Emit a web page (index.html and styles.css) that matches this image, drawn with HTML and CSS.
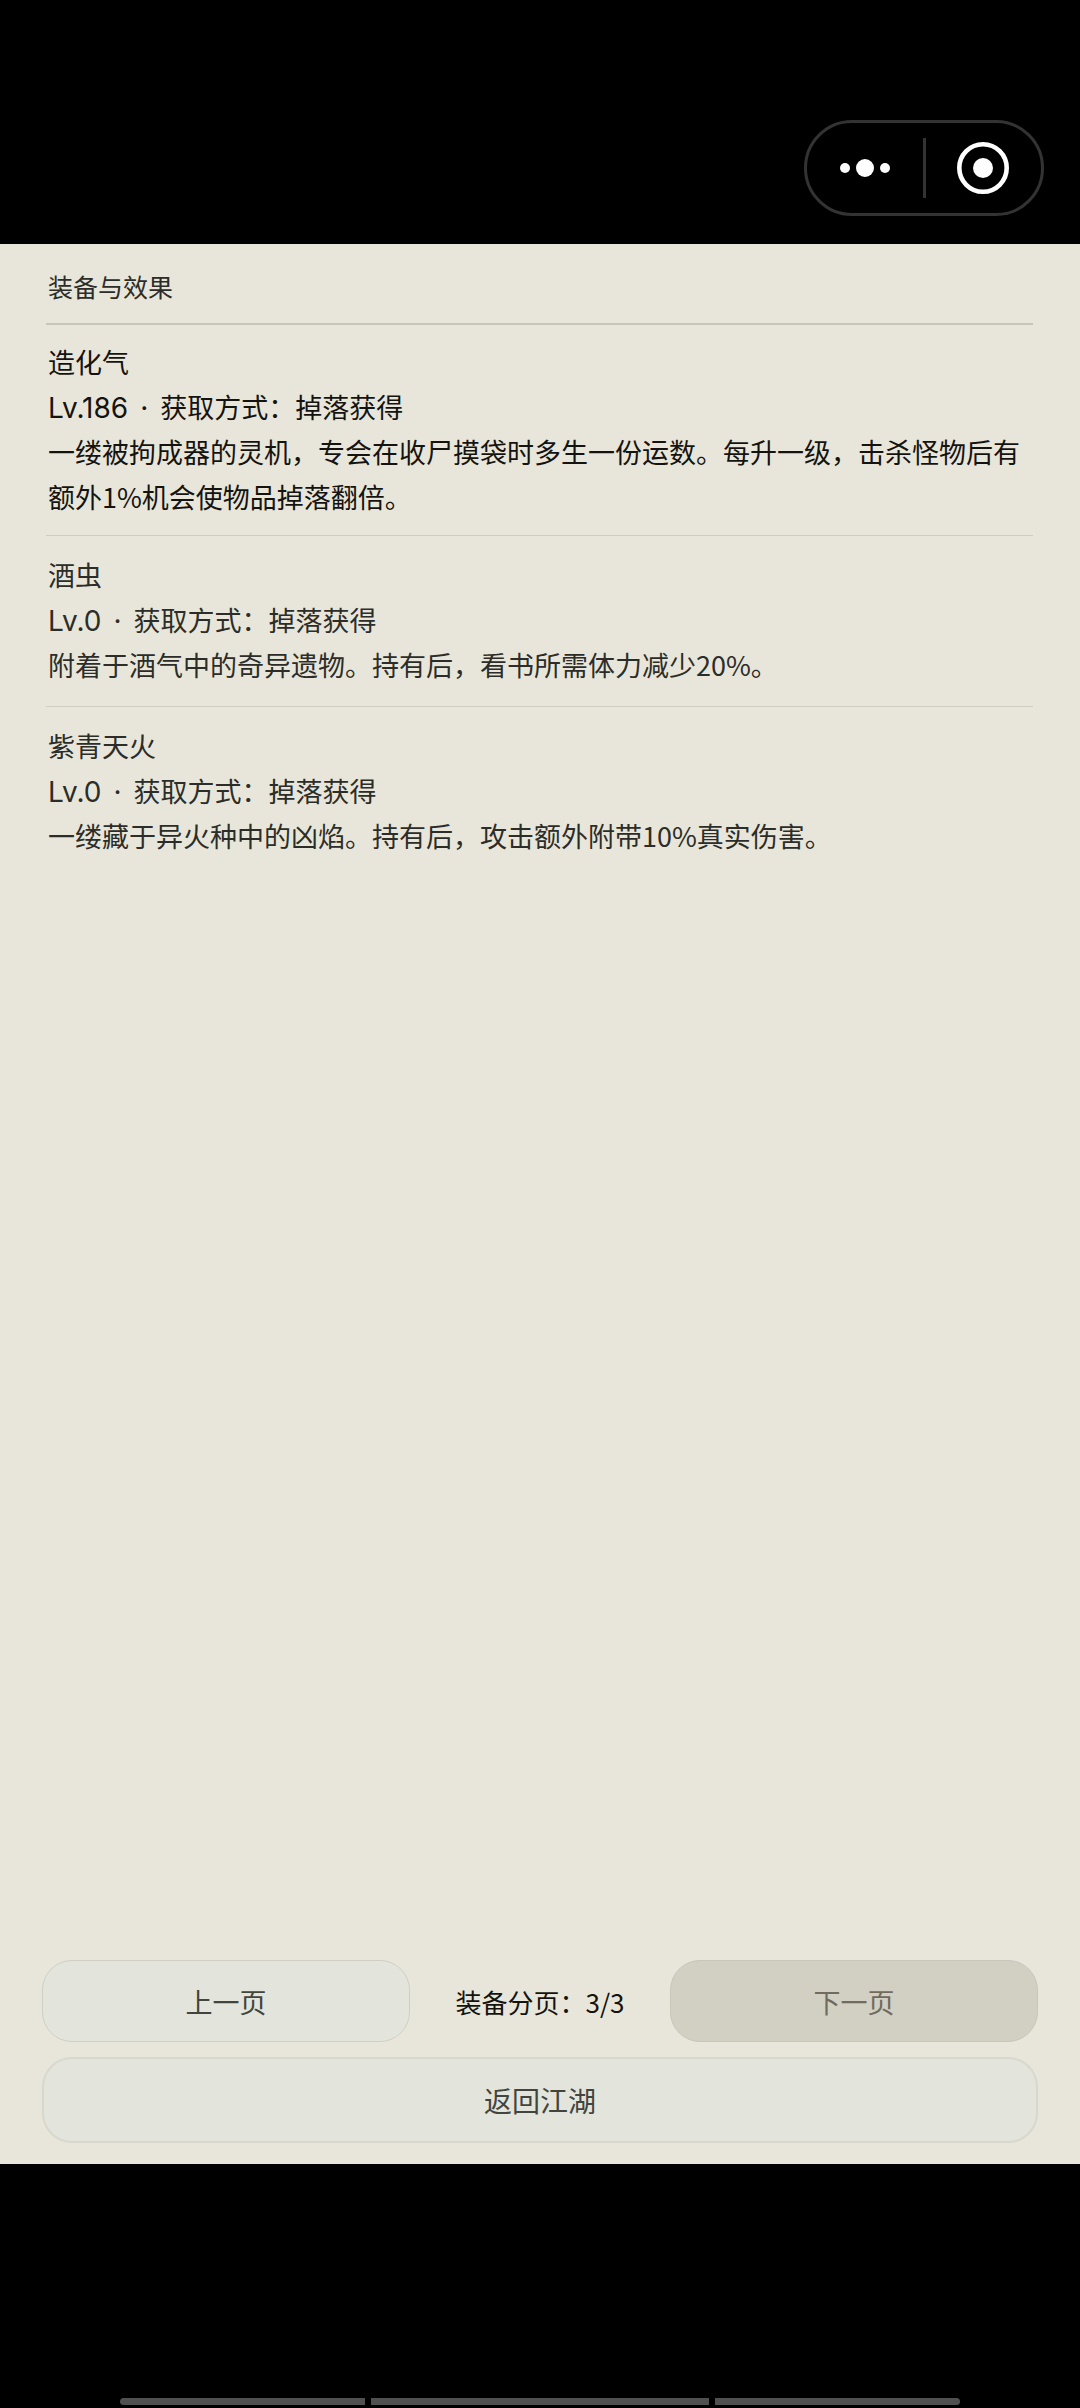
FILE: index.html
```html
<!DOCTYPE html>
<html lang="zh-CN">
<head>
  <meta charset="UTF-8">
  <meta name="viewport" content="width=device-width, initial-scale=1.0">
  <title>装备与效果</title>
  <link rel="stylesheet" href="styles.css">
</head>
<body>
  <header class="top-bar">
    <div class="capsule">
      <button class="capsule-btn" type="button" aria-label="更多">
        <svg width="52" height="20" viewBox="0 0 52 20">
          <circle cx="6" cy="10" r="5" fill="#fff"/>
          <circle cx="26" cy="10" r="9" fill="#fff"/>
          <circle cx="46" cy="10" r="5" fill="#fff"/>
        </svg>
      </button>
      <span class="capsule-line"></span>
      <button class="capsule-btn" type="button" aria-label="关闭">
        <svg width="52" height="52" viewBox="0 0 52 52">
          <circle cx="26" cy="26" r="23.7" fill="none" stroke="#fff" stroke-width="4.6"/>
          <circle cx="26" cy="26" r="10" fill="#fff"/>
        </svg>
      </button>
    </div>
  </header>

  <main class="panel">
    <section class="equip">
      <h1 class="equip-title">装备与效果</h1>
      <ul class="equip-list">
        <li class="equip-item active">
          <h2>造化气</h2>
          <p><span class="level">Lv.186<span class="dot">·</span></span>获取方式：掉落获得</p>
          <p>一缕被拘成器的灵机，专会在收尸摸袋时多生一份运数。每升一级，击杀怪物后有额外1%机会使物品掉落翻倍。</p>
        </li>
        <li class="equip-item">
          <h2>酒虫</h2>
          <p><span class="level">Lv.0<span class="dot">·</span></span>获取方式：掉落获得</p>
          <p>附着于酒气中的奇异遗物。持有后，看书所需体力减少20%。</p>
        </li>
        <li class="equip-item">
          <h2>紫青天火</h2>
          <p><span class="level">Lv.0<span class="dot">·</span></span>获取方式：掉落获得</p>
          <p>一缕藏于异火种中的凶焰。持有后，攻击额外附带10%真实伤害。</p>
        </li>
      </ul>
    </section>

    <nav class="actions">
      <div class="pager">
        <button class="btn" type="button">上一页</button>
        <span class="pager-info">装备分页：3/3</span>
        <button class="btn" type="button" disabled>下一页</button>
      </div>
      <button class="btn btn-back" type="button">返回江湖</button>
    </nav>
  </main>

  <footer class="dock">
    <span></span>
    <span></span>
    <span></span>
  </footer>
</body>
</html>
```
FILE: styles.css
```css
* {
  box-sizing: border-box;
  margin: 0;
  padding: 0;
}

body {
  font-family: 'Noto Sans CJK SC', sans-serif;
  font-size: 27px;
  line-height: 45px;
  background-color: #000;
  color: #2c2d28;
  min-height: 100vh;
  display: flex;
  flex-direction: column;
}

.top-bar {
  display: flex;
  justify-content: flex-end;
  padding: 120px 36px 28px;
}

.capsule {
  display: flex;
  align-items: center;
  width: 240px;
  height: 96px;
  border: 3px solid #333;
  border-radius: 48px;
}

.capsule-btn {
  flex: 1;
  display: flex;
  justify-content: center;
  align-items: center;
  height: 100%;
  background: none;
  border: none;
  cursor: pointer;
}

.capsule-line {
  width: 3px;
  height: 60px;
  background-color: #333;
}

.panel {
  flex: 1;
  display: flex;
  flex-direction: column;
  justify-content: space-between;
  background-color: #e8e6db;
}

.equip {
  padding: 20px 47px 0 46px;
}

.equip-title {
  padding: 0 2px 14px;
  font-size: 25px;
  font-weight: 400;
  border-bottom: 2px solid #c8c5b9;
}

.equip-list {
  list-style: none;
}

.equip-item {
  padding: 16px 2px 19px;
  border-bottom: 1px solid #cfcdc2;
}

.equip-item:last-child {
  border-bottom: none;
}

.equip-item h2 {
  font-size: 27px;
  font-weight: 400;
}

.equip-item.active {
  padding: 14px 2px 16px;
  color: #15130f;
}

.level {
  font-family: Inter, 'Noto Sans CJK SC', sans-serif;
  font-size: 28px;
  line-height: 1;
}

.dot {
  padding: 0 12px;
}

.actions {
  display: flex;
  flex-direction: column;
  gap: 15px;
  padding: 0 42px 21px;
}

.pager {
  display: grid;
  grid-template-columns: 1fr 260px 1fr;
  align-items: center;
}

.pager-info {
  font-size: 26px;
  text-align: center;
  color: #15130f;
}

.btn {
  height: 82px;
  font-family: inherit;
  font-size: 27px;
  color: #42443e;
  background-color: #e3e5dc;
  border: 1px solid #d0cfc5;
  border-radius: 30px;
  cursor: pointer;
}

.btn:disabled {
  color: #706a5f;
  background-color: #d2cfc3;
  border-color: #c8c5b9;
  cursor: default;
}

.btn-back {
  height: 86px;
  font-size: 28px;
  border-width: 2px;
  border-color: #d8d8cf;
}

.dock {
  display: flex;
  justify-content: center;
  align-items: flex-end;
  gap: 6px;
  height: 244px;
  padding: 0 120px 3px;
}

.dock span {
  flex: 245;
  height: 7px;
  background-color: #505050;
}

.dock span:nth-child(2) {
  flex: 338;
}

.dock span:first-child {
  border-radius: 4px 0 0 4px;
}

.dock span:last-child {
  border-radius: 0 4px 4px 0;
}
```
